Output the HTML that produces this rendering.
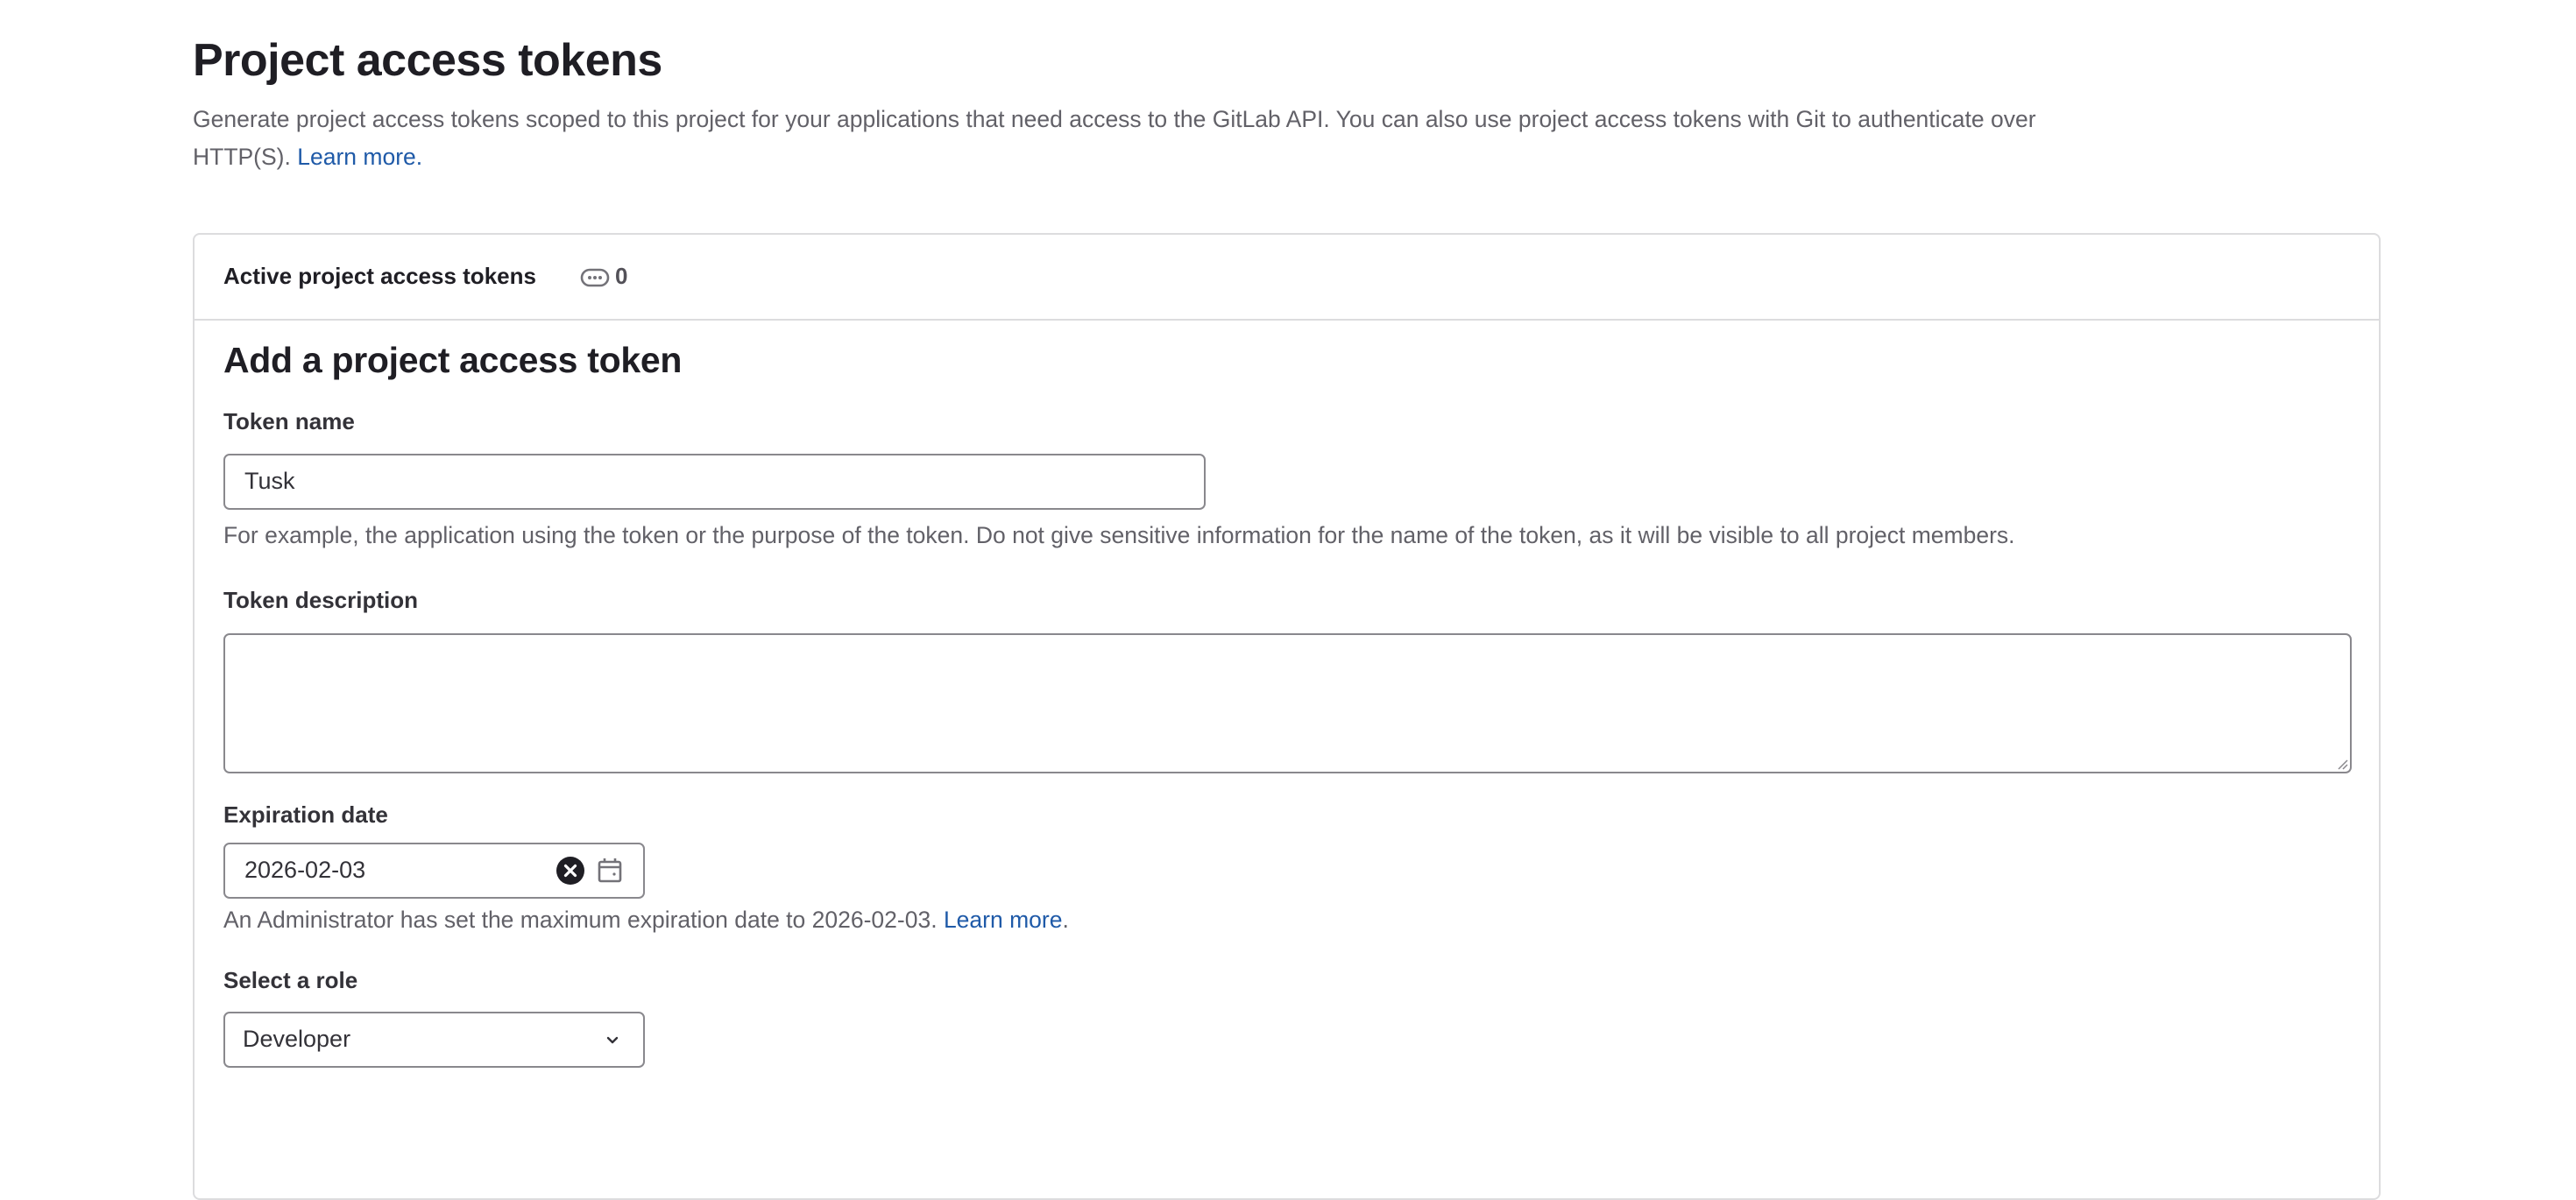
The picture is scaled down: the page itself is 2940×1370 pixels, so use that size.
<!DOCTYPE html>
<html><head><meta charset="utf-8"><style>
html,body{margin:0;padding:0;background:#fff;width:2940px;height:1258px;overflow:hidden;font-family:"Liberation Sans",sans-serif;color:#333238}
.a{position:absolute;white-space:nowrap}
h1{position:absolute;left:220px;top:36px;margin:0;font-size:52px;font-weight:bold;color:#1f1e24;line-height:66px;letter-spacing:-0.5px}
.desc{left:220px;top:115px;font-size:26.5px;line-height:43px;color:#626168}
a{color:#1f5aa8;text-decoration:none}
.card{position:absolute;left:220px;top:266px;width:2493px;height:1100px;border:2px solid #dcdcde;border-radius:8px}
.hdr{position:absolute;left:0;top:0;right:0;height:96px;border-bottom:2px solid #dcdcde}
.lbl{font-size:26px;font-weight:bold;color:#333238}
.help{font-size:26.5px;color:#626168}
.inp{position:absolute;border:2px solid #89888d;border-radius:7px;box-sizing:border-box;background:#fff}
.val{font-size:27px;color:#333238}
</style></head><body>
<h1>Project access tokens</h1>
<div class="a desc">Generate project access tokens scoped to this project for your applications that need access to the GitLab API. You can also use project access tokens with Git to authenticate over<br>HTTP(S). <a>Learn more.</a></div>
<div class="card">
 <div class="hdr">
  <div class="a lbl" style="left:33px;top:32px;color:#1f1e24">Active project access tokens</div>
  <svg class="a" style="left:440px;top:37px" width="34" height="24" viewBox="0 0 34 24"><rect x="2" y="3" width="30" height="18" rx="9" fill="none" stroke="#737278" stroke-width="2.6"/><circle cx="11" cy="12" r="2" fill="#737278"/><circle cx="17" cy="12" r="2" fill="#737278"/><circle cx="23" cy="12" r="2" fill="#737278"/></svg>
  <div class="a lbl" style="left:480px;top:32px;color:#535158">0</div>
 </div>
 <div class="a" style="left:33px;top:120px;font-size:41px;font-weight:bold;color:#1f1e24;letter-spacing:-0.3px">Add a project access token</div>
 <div class="a lbl" style="left:33px;top:198px">Token name</div>
 <div class="inp" style="left:33px;top:250px;width:1121px;height:64px"><div class="a val" style="left:22px;top:14px">Tusk</div></div>
 <div class="a help" style="left:33px;top:328px">For example, the application using the token or the purpose of the token. Do not give sensitive information for the name of the token, as it will be visible to all project members.</div>
 <div class="a lbl" style="left:33px;top:402px">Token description</div>
 <div class="inp" style="left:33px;top:455px;width:2429px;height:160px">
  <svg class="a" style="right:2px;bottom:2px" width="14" height="14"><path d="M13 3L3 13M13 8L8 13" stroke="#89888d" stroke-width="1.5"/></svg>
 </div>
 <div class="a lbl" style="left:33px;top:647px">Expiration date</div>
 <div class="inp" style="left:33px;top:694px;width:481px;height:64px">
  <div class="a val" style="left:22px;top:14px">2026-02-03</div>
  <svg class="a" style="left:378px;top:14px" width="32" height="32" viewBox="0 0 32 32"><circle cx="16" cy="16" r="16" fill="#1f1e24"/><path d="M10.5 10.5L21.5 21.5M21.5 10.5L10.5 21.5" stroke="#fff" stroke-width="3.2" stroke-linecap="round"/></svg>
  <svg class="a" style="left:424px;top:13px" width="30" height="32" viewBox="0 0 30 32"><rect x="3" y="7" width="24" height="22" rx="2" fill="none" stroke="#737278" stroke-width="2.6"/><path d="M3 13H27M9 3V8M21 3V8" stroke="#737278" stroke-width="2.6"/><circle cx="20" cy="21" r="1.6" fill="#737278"/></svg>
 </div>
 <div class="a help" style="left:33px;top:767px">An Administrator has set the maximum expiration date to 2026-02-03. <a>Learn more</a>.</div>
 <div class="a lbl" style="left:33px;top:836px">Select a role</div>
 <div class="inp" style="left:33px;top:887px;width:481px;height:64px">
  <div class="a val" style="left:20px;top:14px">Developer</div>
  <svg class="a" style="left:432px;top:22px" width="20" height="18" viewBox="0 0 20 18"><path d="M5 6L10 11L15 6" fill="none" stroke="#333238" stroke-width="2.4" stroke-linecap="round" stroke-linejoin="round"/></svg>
 </div>
</div>
</body></html>
